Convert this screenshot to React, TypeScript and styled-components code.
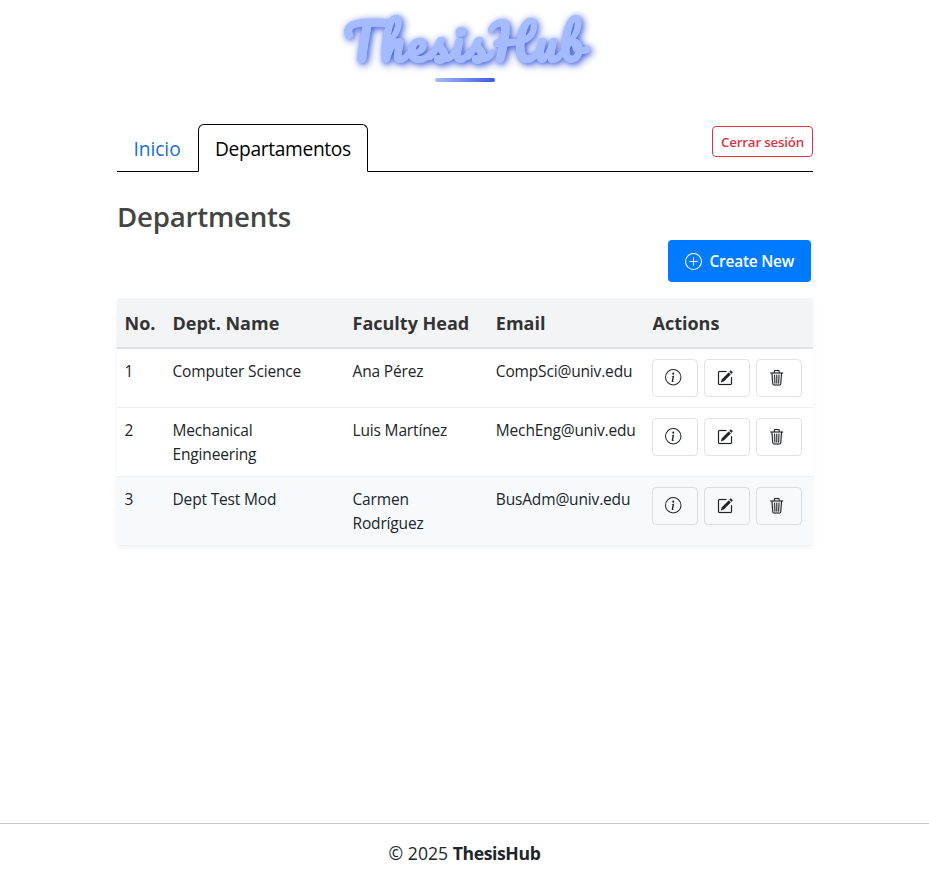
import React from 'react';
import styled, { createGlobalStyle } from 'styled-components';

const GlobalStyle = createGlobalStyle`
  *, *::before, *::after { box-sizing: border-box; }
  body {
    margin: 0;
    background: #fff;
    color: #212529;
    font-family: "Segoe UI", "Open Sans", sans-serif;
    font-size: 15.5px;
    line-height: 24px;
    letter-spacing: -0.16px;
  }
`;

const Page = styled.div`
  display: flex;
  flex-direction: column;
  height: 883px;
`;

const Header = styled.header`
  display: flex;
  flex-direction: column;
  align-items: center;
  height: 124px;
`;

const Logo = styled.h1`
  margin: 0;
  padding: 0 8px;
  font: 700 48.5px/84px Pacifico, cursive;
  letter-spacing: 2.6px;
  color: #a5bbff;
  -webkit-text-stroke: 0.5px #a5bbff;
  text-shadow: 2px 2px 8px #3b5bdb, 1px 1px 4px rgba(59, 91, 219, 0.5);
  white-space: nowrap;
`;

const LogoBar = styled.div`
  width: 60px;
  height: 4px;
  margin-top: -6px;
  border-radius: 2px;
  background: linear-gradient(90deg, #a5bbff, #3b5bdb);
`;

const Main = styled.main`
  flex: 1;
  width: 696px;
  margin-left: 117px;
`;

const Nav = styled.nav`
  display: flex;
  height: 48px;
  border-bottom: 1px solid #000;
`;

const Tab = styled.a<{ $active?: boolean }>`
  height: 48px;
  width: ${p => (p.$active ? '170px' : '81px')};
  padding: 9px 0 0 ${p => (p.$active ? '16px' : '15.4px')};
  border: 1px solid ${p => (p.$active ? '#000' : 'transparent')};
  border-bottom-color: ${p => (p.$active ? '#fff' : 'transparent')};
  border-radius: 6px 6px 0 0;
  background: ${p => (p.$active ? '#fff' : 'transparent')};
  color: ${p => (p.$active ? '#000' : '#1a70cf')};
  font-size: 19.2px;
  line-height: 30px;
  letter-spacing: ${p => (p.$active ? '-0.34px' : '-0.05px')};
  white-space: nowrap;
`;

const Logout = styled.button`
  margin: 2px 0 0 auto;
  width: 101px;
  height: 31px;
  padding: 2px 0 0;
  border: 1px solid #dc3545;
  border-radius: 4px;
  background: transparent;
  color: #dc3545;
  font: 600 13.3px/21px "Segoe UI", "Open Sans", sans-serif;
  letter-spacing: -0.19px;
`;

const Title = styled.h2`
  margin: 27px 0 7px;
  color: #444;
  font-size: 27.6px;
  font-weight: 600;
  line-height: 34px;
  letter-spacing: -0.2px;
`;

const Toolbar = styled.div`
  display: flex;
  justify-content: flex-end;
  padding-right: 2px;
  margin-bottom: 16px;
`;

const CreateButton = styled.button`
  display: flex;
  align-items: center;
  gap: 8px;
  width: 143px;
  height: 42px;
  padding: 0 0 0 16.5px;
  border: 0;
  border-radius: 4px;
  background: #007bff;
  color: #fff;
  font: 600 15.4px/24px "Segoe UI", "Open Sans", sans-serif;
  letter-spacing: -0.2px;
`;

const CreateLabel = styled.span`
  padding-top: 2px;
`;

const Table = styled.div`
  border-radius: 4px;
  overflow: hidden;
  box-shadow: 0 2px 6px rgba(0, 0, 0, 0.05);
`;

const Row = styled.div<{ $head?: boolean; $hover?: boolean }>`
  display: grid;
  grid-template-columns: 48px 180px 143.3px 156.7px 1fr;
  border-bottom: ${p => (p.$head ? '2px solid #dee2e6' : '1px solid #eff0f2')};
  background: ${p => (p.$head ? '#f3f4f6' : p.$hover ? '#f6fafd' : '#fff')};
  ${p =>
    p.$head &&
    `
    height: 51px;
    color: #333;
    font-size: 18px;
    font-weight: 700;
    letter-spacing: 0;
  `}
`;

const Cell = styled.div<{ $head?: boolean }>`
  padding: ${p => (p.$head ? '13px' : '10px')} 0 10px 7.5px;
`;

const Name = styled.div`
  max-width: 140px;
`;

const Person = styled.div`
  max-width: 110px;
`;

const Actions = styled.div`
  display: flex;
  gap: 6px;
  padding: 10px 0 10px 7px;
`;

const IconButton = styled.button`
  display: flex;
  align-items: center;
  width: 46px;
  height: 38px;
  padding: 0 0 1px 12.5px;
  border: 1px solid rgba(33, 37, 41, 0.13);
  border-radius: 4px;
  background: transparent;
  color: #212529;
`;

const Footer = styled.footer`
  height: 60px;
  border-top: 1px solid #c8c8c8;
  text-align: center;
  font-size: 17.6px;
  line-height: 59px;
  letter-spacing: 0;
`;

const Brand = styled.strong`
  letter-spacing: -0.38px;
`;

type IconProps = { size?: number; weight?: number; children: React.ReactNode };
const Icon = ({ size = 16, weight = 0, children }: IconProps) => (
  <svg
    width={size}
    height={size}
    viewBox="0 0 16 16"
    fill="currentColor"
    stroke="currentColor"
    strokeWidth={weight}
    overflow="visible"
    aria-hidden="true"
  >
    {children}
  </svg>
);

const InfoIcon = () => (
  <Icon size={16.5}>
    <path d="M8 15A7 7 0 1 1 8 1a7 7 0 0 1 0 14m0 1A8 8 0 1 0 8 0a8 8 0 0 0 0 16" />
    <path d="m8.93 6.588-2.29.287-.082.38.45.083c.294.07.352.176.288.469l-.738 3.468c-.194.897.105 1.319.808 1.319.545 0 1.178-.252 1.465-.598l.088-.416c-.2.176-.492.246-.686.246-.275 0-.375-.193-.304-.533zM9 4.5a1 1 0 1 1-2 0 1 1 0 0 1 2 0" />
  </Icon>
);

const EditIcon = () => (
  <Icon weight={0.2}>
    <path d="M15.502 1.94a.5.5 0 0 1 0 .706L14.459 3.69l-2-2L13.502.646a.5.5 0 0 1 .707 0l1.293 1.293zm-1.75 2.456-2-2L4.939 9.21a.5.5 0 0 0-.121.196l-.805 2.414a.25.25 0 0 0 .316.316l2.414-.805a.5.5 0 0 0 .196-.12z" />
    <path d="M1 13.5A1.5 1.5 0 0 0 2.5 15h11a1.5 1.5 0 0 0 1.5-1.5v-6a.5.5 0 0 0-1 0v6a.5.5 0 0 1-.5.5h-11a.5.5 0 0 1-.5-.5v-11a.5.5 0 0 1 .5-.5H9a.5.5 0 0 0 0-1H2.5A1.5 1.5 0 0 0 1 2.5z" />
  </Icon>
);

const TrashIcon = () => (
  <Icon size={15.5}>
    <path
      fillRule="evenodd"
      strokeWidth="0.15"
      d="M6.5 1h3a.5.5 0 0 1 .5.5v1H6v-1a.5.5 0 0 1 .5-.5M11 2.5v-1A1.5 1.5 0 0 0 9.5 0h-3A1.5 1.5 0 0 0 5 1.5v1H1.9a.6.6 0 0 0 0 1.2h.6l.85 10.46A2 2 0 0 0 5.3 16h5.4a2 2 0 0 0 1.95-1.84l.85-10.46h.6a.6.6 0 0 0 0-1.2zm1.4 1.2-.8 10.38a1 1 0 0 1-1 .92H5.4a1 1 0 0 1-1-.92L3.6 3.7zM5.2 5h1l.4 9h-1zM7.5 5h1v9h-1zM9.8 5h1l-.4 9h-1z"
    />
  </Icon>
);

const PlusIcon = () => (
  <Icon size={17}>
    <path d="M8 15A7 7 0 1 1 8 1a7 7 0 0 1 0 14m0 1A8 8 0 1 0 8 0a8 8 0 0 0 0 16" />
    <path d="M8 4a.5.5 0 0 1 .5.5v3h3a.5.5 0 0 1 0 1h-3v3a.5.5 0 0 1-1 0v-3h-3a.5.5 0 0 1 0-1h3v-3A.5.5 0 0 1 8 4" />
  </Icon>
);

const columns = ['No.', 'Dept. Name', 'Faculty Head', 'Email', 'Actions'];

const departments = [
  { name: 'Computer Science', head: 'Ana Pérez', email: 'CompSci@univ.edu' },
  { name: 'Mechanical Engineering', head: 'Luis Martínez', email: 'MechEng@univ.edu' },
  { name: 'Dept Test Mod', head: 'Carmen Rodríguez', email: 'BusAdm@univ.edu', hover: true },
];

export default function App() {
  return (
    <Page>
      <GlobalStyle />
      <Header>
        <Logo>ThesisHub</Logo>
        <LogoBar />
      </Header>
      <Main>
        <Nav>
          <Tab>Inicio</Tab>
          <Tab $active>Departamentos</Tab>
          <Logout>Cerrar sesión</Logout>
        </Nav>
        <Title>Departments</Title>
        <Toolbar>
          <CreateButton>
            <PlusIcon />
            <CreateLabel>Create New</CreateLabel>
          </CreateButton>
        </Toolbar>
        <Table>
          <Row $head>
            {columns.map(c => (
              <Cell key={c} $head>{c}</Cell>
            ))}
          </Row>
          {departments.map((d, i) => (
            <Row key={d.email} $hover={d.hover}>
              <Cell>{i + 1}</Cell>
              <Cell><Name>{d.name}</Name></Cell>
              <Cell><Person>{d.head}</Person></Cell>
              <Cell>{d.email}</Cell>
              <Actions>
                <IconButton aria-label="Details"><InfoIcon /></IconButton>
                <IconButton aria-label="Edit"><EditIcon /></IconButton>
                <IconButton aria-label="Delete"><TrashIcon /></IconButton>
              </Actions>
            </Row>
          ))}
        </Table>
      </Main>
      <Footer>
        © 2025 <Brand>ThesisHub</Brand>
      </Footer>
    </Page>
  );
}
